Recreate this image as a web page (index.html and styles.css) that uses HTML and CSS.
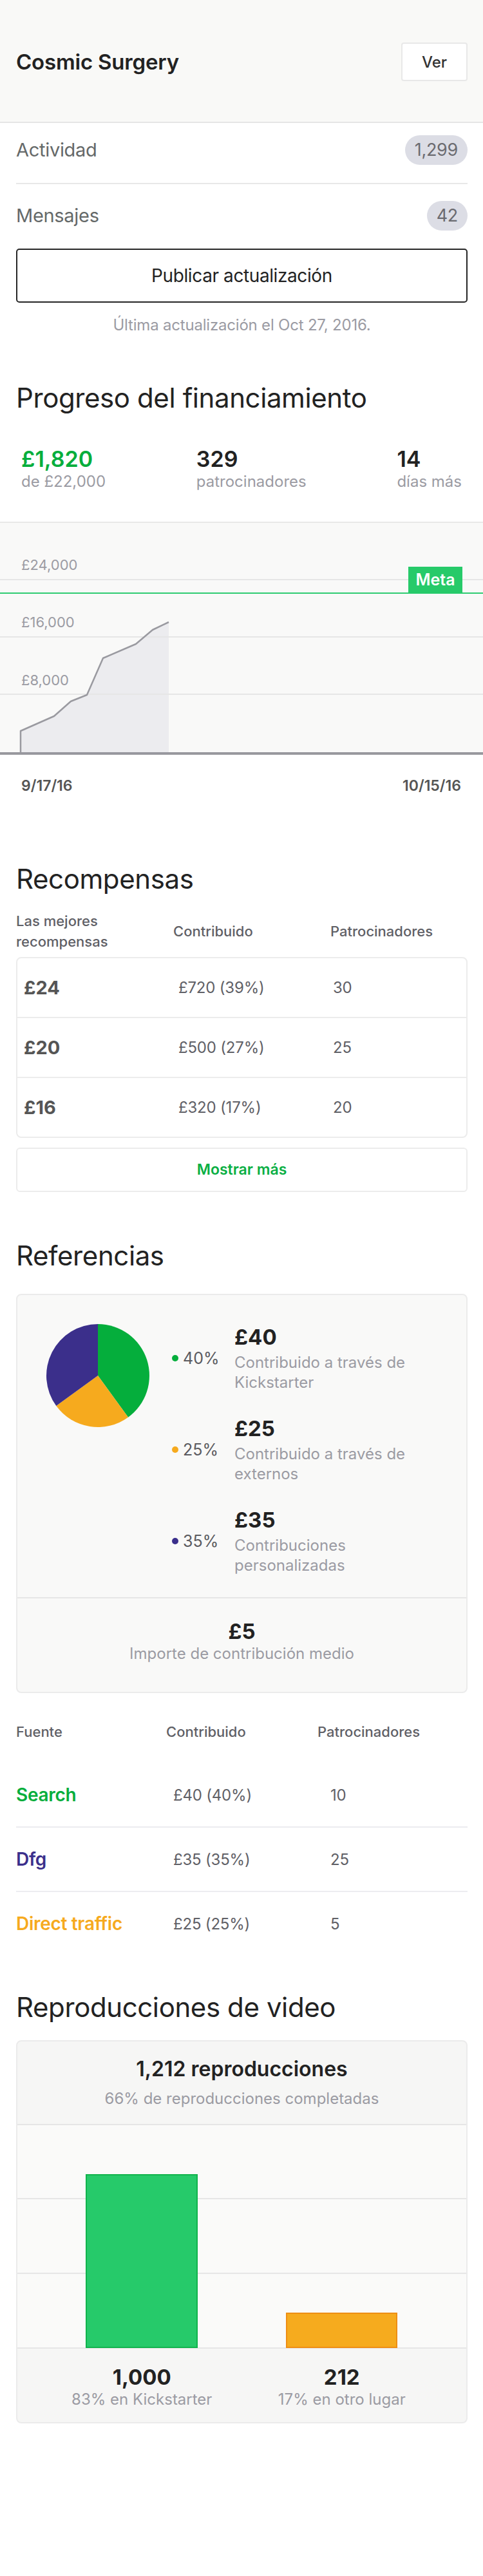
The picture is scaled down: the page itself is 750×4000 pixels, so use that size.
FILE: index.html
```html
<!DOCTYPE html>
<html lang="es">
<head>
<meta charset="utf-8">
<title>Cosmic Surgery</title>
<link rel="stylesheet" href="styles.css">
</head>
<body>
<header class="top">
  <h1 class="project">Cosmic Surgery</h1>
  <a class="btn-ver">Ver</a>
</header>

<section class="summary">
  <div class="stat-row first"><span class="stat-label">Actividad</span><span class="badge">1,299</span></div>
  <div class="stat-row second"><span class="stat-label">Mensajes</span><span class="badge">42</span></div>
  <button class="btn-update">Publicar actualización</button>
  <p class="updated">Última actualización el Oct 27, 2016.</p>
</section>

<h2 class="section-title t-funding">Progreso del financiamiento</h2>
<div class="funding-stats">
  <div class="fstat"><div class="fvalue green">£1,820</div><div class="flabel">de £22,000</div></div>
  <div class="fstat"><div class="fvalue">329</div><div class="flabel">patrocinadores</div></div>
  <div class="fstat"><div class="fvalue">14</div><div class="flabel">días más</div></div>
</div>

<div class="chart">
  <svg class="progress-chart" width="750" height="362" viewBox="0 0 750 362">
    <rect x="0" y="0" width="750" height="358" fill="#f9f9f8"/>
    <rect x="0" y="0" width="750" height="2" fill="#e8e8e8"/>
    <polygon points="32,358 32,325 84,302 110,279 135,269 160,212 211,190 237,168 262,156 262,358" fill="#ececef"/>
    <rect x="0" y="89" width="750" height="2" fill="#e6e6e6"/>
    <rect x="0" y="178" width="750" height="2" fill="#e6e6e6"/>
    <rect x="0" y="267" width="750" height="2" fill="#e6e6e6"/>
    <polyline points="32,358 32,325 84,302 110,279 135,269 160,212 211,190 237,168 262,156" fill="none" stroke="#9a9aa0" stroke-width="2.5" stroke-linejoin="round"/>
    <rect x="0" y="110" width="750" height="2" fill="#2ecc71"/>
    <rect x="634" y="70" width="84" height="41" fill="#27ca69"/>
    <text class="meta-text" x="676" y="99" text-anchor="middle">Meta</text>
    <text class="axis-label" x="33" y="75">£24,000</text>
    <text class="axis-label" x="33" y="164">£16,000</text>
    <text class="axis-label" x="33" y="254">£8,000</text>
    <rect x="0" y="358" width="750" height="4" fill="#98989e"/>
  </svg>
</div>
<div class="chart-dates"><span>9/17/16</span><span>10/15/16</span></div>

<h2 class="section-title t-rewards">Recompensas</h2>
<div class="table-head rewards-head">
  <span class="th-first">Las mejores<br>recompensas</span>
  <span>Contribuido</span>
  <span>Patrocinadores</span>
</div>
<div class="rewards-box">
  <div class="reward-row"><span class="reward-amt">£24</span><span class="cell">£720 (39%)</span><span class="cell">30</span></div>
  <div class="reward-row"><span class="reward-amt">£20</span><span class="cell">£500 (27%)</span><span class="cell">25</span></div>
  <div class="reward-row"><span class="reward-amt">£16</span><span class="cell">£320 (17%)</span><span class="cell">20</span></div>
</div>
<div class="show-more">Mostrar más</div>

<h2 class="section-title t-refs">Referencias</h2>
<div class="refs-box">
  <div class="refs-top">
    <svg class="pie" width="160" height="160" viewBox="0 0 160 160">
      <path d="M80 80 L80 0 A80 80 0 0 1 127.02 144.72 Z" fill="#05ae3c"/>
      <path d="M80 80 L127.02 144.72 A80 80 0 0 1 15.28 127.02 Z" fill="#f6aa1e"/>
      <path d="M80 80 L15.28 127.02 A80 80 0 0 1 80 0 Z" fill="#3b2f8b"/>
    </svg>
    <div class="legend">
      <div class="legend-item">
        <div class="pct"><span class="dot dot-green"></span>40%</div>
        <div class="legend-text"><div class="lvalue">£40</div><div class="ldesc">Contribuido a través de Kickstarter</div></div>
      </div>
      <div class="legend-item">
        <div class="pct"><span class="dot dot-orange"></span>25%</div>
        <div class="legend-text"><div class="lvalue">£25</div><div class="ldesc">Contribuido a través de externos</div></div>
      </div>
      <div class="legend-item">
        <div class="pct"><span class="dot dot-purple"></span>35%</div>
        <div class="legend-text"><div class="lvalue">£35</div><div class="ldesc">Contribuciones personalizadas</div></div>
      </div>
    </div>
  </div>
  <div class="refs-bottom">
    <div class="lvalue">£5</div>
    <div class="ldesc">Importe de contribución medio</div>
  </div>
</div>

<div class="table-head source-head">
  <span>Fuente</span>
  <span>Contribuido</span>
  <span>Patrocinadores</span>
</div>
<div class="source-list">
  <div class="source-row"><span class="src green">Search</span><span class="cell">£40 (40%)</span><span class="cell">10</span></div>
  <div class="source-row"><span class="src purple">Dfg</span><span class="cell">£35 (35%)</span><span class="cell">25</span></div>
  <div class="source-row"><span class="src orange">Direct traffic</span><span class="cell">£25 (25%)</span><span class="cell">5</span></div>
</div>

<h2 class="section-title t-video">Reproducciones de video</h2>
<div class="video-box">
  <div class="video-top">
    <div class="vtitle">1,212 reproducciones</div>
    <div class="ldesc vsub">66% de reproducciones completadas</div>
  </div>
  <svg class="bar-chart" width="697" height="347" viewBox="0 0 697 347">
    <rect x="0" y="0" width="697" height="347" fill="#fafaf9"/>
    <rect x="0" y="113" width="697" height="2" fill="#e6e6e6"/>
    <rect x="0" y="229" width="697" height="2" fill="#e6e6e6"/>
    <rect x="0" y="345" width="697" height="2" fill="#e6e6e6"/>
    <rect x="107" y="77" width="172" height="268" fill="#26ca6a" stroke="#10b34c" stroke-width="2"/>
    <rect x="418" y="292" width="171" height="53" fill="#f6ab1e" stroke="#ee8e14" stroke-width="2"/>
  </svg>
  <div class="video-bottom">
    <div class="vcol"><div class="lvalue">1,000</div><div class="ldesc">83% en Kickstarter</div></div>
    <div class="vcol"><div class="lvalue">212</div><div class="ldesc">17% en otro lugar</div></div>
  </div>
</div>
<div class="page-end"></div>
</body>
</html>
```

FILE: styles.css
```css
* { box-sizing: border-box; }

body {
  margin: 0;
  width: 750px;
  background: #ffffff;
  font-family: Inter, "Noto Sans", "Liberation Sans", sans-serif;
  color: #222222;
}

/* Header */
.top {
  display: flex;
  justify-content: space-between;
  align-items: center;
  padding: 66px 24px 63px 25px;
  background: #f9f9f7;
  border-bottom: 2px solid #e6e6e6;
}
.project {
  margin: 0;
  font-size: 33px;
  font-weight: 600;
  letter-spacing: -0.2px;
  color: #222222;
}
.btn-ver {
  display: flex;
  align-items: center;
  justify-content: center;
  width: 103px;
  height: 60px;
  background: #ffffff;
  border: 2px solid #e8e8e8;
  border-radius: 4px;
  font-size: 24px;
  font-weight: 500;
  color: #333333;
}

/* Summary */
.summary {
  padding: 0 24px 0 25px;
}
.stat-row {
  display: flex;
  justify-content: space-between;
  align-items: center;
}
.stat-row.first {
  padding: 19px 0 28px;
  border-bottom: 2px solid #e8e8e8;
}
.stat-row.second {
  padding-top: 26px;
}
.stat-label {
  font-size: 29px;
  line-height: 46px;
  color: #656969;
  letter-spacing: -0.3px;
}
.badge {
  height: 46px;
  line-height: 46px;
  padding: 0 15px;
  border-radius: 23px;
  background: #dcdde5;
  font-size: 27px;
  color: #6b6b70;
  letter-spacing: -0.3px;
}
.btn-update {
  display: block;
  width: 100%;
  height: 84px;
  margin-top: 28px;
  background: #ffffff;
  border: 2px solid #262626;
  border-radius: 5px;
  font-family: inherit;
  font-size: 28px;
  color: #222222;
  letter-spacing: -0.4px;
}
.updated {
  margin: 20px 0 0;
  text-align: center;
  font-size: 24px;
  line-height: 30px;
  color: #9b9ba3;
  letter-spacing: -0.2px;
}

/* Section titles */
.section-title {
  margin: 0;
  padding-left: 25px;
  font-size: 42px;
  line-height: 52px;
  font-weight: 400;
  letter-spacing: -0.4px;
  color: #222222;
}
.t-funding { margin-top: 72px; }
.t-rewards { margin-top: 104px; }
.t-refs { margin-top: 73px; }
.t-video { margin-top: 55px; }

/* Funding stats */
.funding-stats {
  display: flex;
  justify-content: space-between;
  padding: 0 33px;
  margin-top: 49px;
}
.fvalue {
  font-size: 34px;
  line-height: 40px;
  font-weight: 600;
  color: #222222;
}
.fvalue.green { color: #05ae3c; }
.flabel {
  font-size: 24px;
  line-height: 30px;
  color: #9b9ba3;
}

/* Chart */
.chart {
  margin-top: 47px;
}
.progress-chart { display: block; }
.axis-label {
  font-family: Inter, "Noto Sans", sans-serif;
  font-size: 22px;
  fill: #9b9ba3;
}
.meta-text {
  font-family: Inter, "Noto Sans", sans-serif;
  font-size: 25px;
  font-weight: 600;
  fill: #ffffff;
}
.chart-dates {
  display: flex;
  justify-content: space-between;
  padding: 0 34px 0 33px;
  margin-top: 33px;
  font-size: 23px;
  line-height: 30px;
  font-weight: 600;
  color: #555555;
}

/* Tables */
.table-head {
  display: grid;
  align-items: center;
  padding: 0 24px 0 25px;
  font-size: 22px;
  line-height: 32px;
  font-weight: 500;
  color: #5f6066;
}
.rewards-head {
  grid-template-columns: 244px 244px 1fr;
  margin-top: 23px;
}
.rewards-box {
  margin: 8px 24px 0 25px;
  border: 2px solid #ececec;
  border-radius: 8px;
}
.reward-row {
  display: grid;
  grid-template-columns: 240px 240px 1fr;
  align-items: center;
  height: 93px;
  padding-left: 10px;
  border-bottom: 2px solid #ececec;
}
.reward-row:last-child {
  height: 91px;
  border-bottom: none;
}
.reward-amt {
  font-size: 29px;
  font-weight: 700;
  color: #555555;
}
.cell {
  font-size: 24px;
  color: #5f6066;
  letter-spacing: -0.2px;
}
.show-more {
  margin: 15px 24px 0 25px;
  height: 69px;
  line-height: 65px;
  border: 2px solid #ececec;
  border-radius: 6px;
  text-align: center;
  font-size: 23px;
  font-weight: 600;
  color: #0aaf44;
}

/* Referrals */
.refs-box {
  margin: 33px 24px 0 25px;
  background: #f9f9f8;
  border: 2px solid #ebebeb;
  border-radius: 8px;
}
.refs-top {
  display: flex;
  align-items: flex-start;
  padding: 45px 0 34px 45px;
}
.pie {
  display: block;
  flex: none;
}
.legend {
  margin-left: 35px;
  display: flex;
  flex-direction: column;
  gap: 36px;
}
.legend-item {
  display: grid;
  grid-template-columns: 97px 1fr;
  align-items: center;
}
.pct {
  display: flex;
  align-items: center;
  font-size: 25px;
  color: #5b5b60;
}
.dot {
  width: 10px;
  height: 10px;
  border-radius: 50%;
  margin-right: 7px;
}
.dot-green { background: #05ae3c; }
.dot-orange { background: #f6aa1e; }
.dot-purple { background: #3b2f8b; }
.lvalue {
  font-size: 33px;
  line-height: 40px;
  font-weight: 700;
  color: #222222;
}
.ldesc {
  font-size: 24px;
  line-height: 31px;
  color: #9b9ba3;
}
.legend-text .ldesc {
  margin-top: 4px;
  max-width: 300px;
}
.refs-bottom {
  border-top: 2px solid #e6e6e6;
  padding: 31px 0 44px;
  text-align: center;
}
.refs-bottom .ldesc { line-height: 30px; }

/* Sources */
.source-head {
  grid-template-columns: 233px 235px 1fr;
  margin-top: 45px;
  line-height: 30px;
}
.source-list {
  margin-top: 34px;
  padding: 0 24px 0 25px;
}
.source-row {
  display: grid;
  grid-template-columns: 244px 244px 1fr;
  align-items: center;
  height: 100px;
  border-bottom: 2px solid #ececf0;
}
.source-row:last-child {
  height: 98px;
  border-bottom: none;
}
.src {
  font-size: 28px;
  font-weight: 600;
  letter-spacing: -0.3px;
}
.green { color: #05ae3c; }
.purple { color: #3b2f8b; }
.orange { color: #f6aa1e; }

/* Video */
.video-box {
  margin: 25px 24px 0 25px;
  border: 2px solid #ebebeb;
  border-radius: 8px;
  overflow: hidden;
  background: #f6f6f5;
}
.video-top {
  padding: 23px 0 24px;
  text-align: center;
  border-bottom: 2px solid #e6e6e6;
}
.vtitle {
  font-size: 32px;
  line-height: 40px;
  font-weight: 600;
  color: #222222;
}
.vsub {
  margin-top: 11px;
  line-height: 30px;
}
.bar-chart { display: block; }
.video-bottom {
  display: grid;
  grid-template-columns: 1fr 1fr;
  padding: 24px 38px 20px;
  text-align: center;
}
.video-bottom .ldesc { line-height: 30px; }
.page-end { height: 235px; }
```
